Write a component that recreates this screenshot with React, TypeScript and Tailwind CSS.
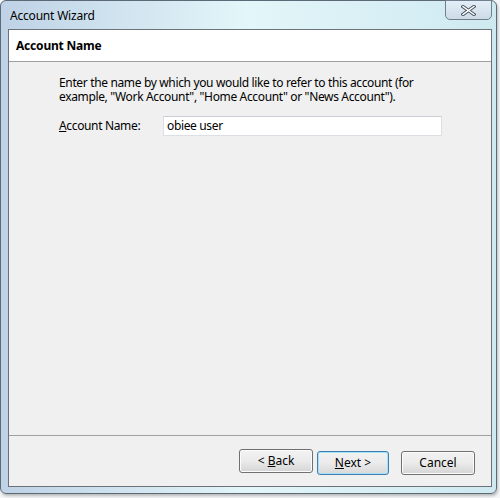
import React from "react";

const font = { fontFamily: '"Noto Sans", "Open Sans", sans-serif' };

const Btn = ({ children, focused, w }: { children: React.ReactNode; focused?: boolean; w: string }) => (
  <button
    className={
      "h-[24px] rounded-[3px] border text-[12px] text-black leading-none " +
      w +
      " " +
      (focused
        ? "border-[#3c7fb1] shadow-[inset_0_0_0_1px_#a6e0fb] bg-gradient-to-b from-[#f2f2f2] via-[#ebebeb] to-[#d8d8d8]"
        : "border-[#707070] shadow-[inset_0_0_0_1px_#fcfcfc] bg-gradient-to-b from-[#f2f2f2] via-[#ebebeb] to-[#d4d4d4]")
    }
  >
    {children}
  </button>
);

export default function App() {
  return (
    <div className="w-[500px] h-[498px] bg-[#f4f6f7]" style={font}>
      <div className="relative w-[497px] h-[494px] rounded-[6px] border border-[#5c6a78] bg-gradient-to-r from-[#bfd2e6] via-[#e3f6f9] to-[#cfe9f1] pl-[7px] pr-[4px] pt-[28px] pb-[6px] shadow-[1px_2px_3px_rgba(0,0,0,0.25)]">
        <div className="absolute left-[9px] top-[6px] text-[12px] text-black tracking-[-0.2px]">Account Wizard</div>
        <div className="absolute right-[4px] top-[-1px] w-[47px] h-[20px] rounded-b-[5px] border border-[#6f7f90] bg-gradient-to-b from-[#e3eef7] to-[#cddbe7] flex items-center justify-center">
          <svg width="15" height="11" viewBox="0 0 15 11">
            <path d="M2 1.5 L13 9.5 M13 1.5 L2 9.5" stroke="#4b5563" strokeWidth="3.4" strokeLinecap="square" />
            <path d="M2 1.5 L13 9.5 M13 1.5 L2 9.5" stroke="#ffffff" strokeWidth="1.4" strokeLinecap="square" />
          </svg>
        </div>
        <div className="w-[484px] h-[458px] border border-[#6c7277] bg-[#f0f0f0] flex flex-col">
          <div className="h-[32px] shrink-0 bg-white border-b border-[#a0a0a0] flex items-center pl-[7px] text-[12px] font-bold text-black tracking-[-0.2px]">
            Account Name
          </div>
          <div className="flex-1 pl-[50px] pt-[14px] text-[12px] text-black tracking-[-0.35px]">
            <div className="leading-[14px]">
              <div>Enter the name by which you would like to refer to this account (for</div>
              <div>example, "Work Account", "Home Account" or "News Account").</div>
            </div>
            <div className="flex items-center mt-[12px] leading-[16px]">
              <label className="w-[104px]">
                <span className="underline">A</span>ccount Name:
              </label>
              <div className="w-[279px] h-[20px] bg-white border border-[#dcdfe3] border-t-[#c9cdd3] flex items-center pl-[3px]">
                obiee user
              </div>
            </div>
          </div>
          <div className="h-[51px] shrink-0 border-t border-[#a0a0a0] flex justify-end items-start pt-[13px] pr-[16px]">
            <Btn w="w-[74px]">
              &lt; <span className="underline">B</span>ack
            </Btn>
            <div className="ml-[4px]">
              <Btn focused w="w-[72px]">
                <span className="underline">N</span>ext &gt;
              </Btn>
            </div>
            <div className="ml-[12px]">
              <Btn w="w-[74px]">Cancel</Btn>
            </div>
          </div>
        </div>
      </div>
    </div>
  );
}
